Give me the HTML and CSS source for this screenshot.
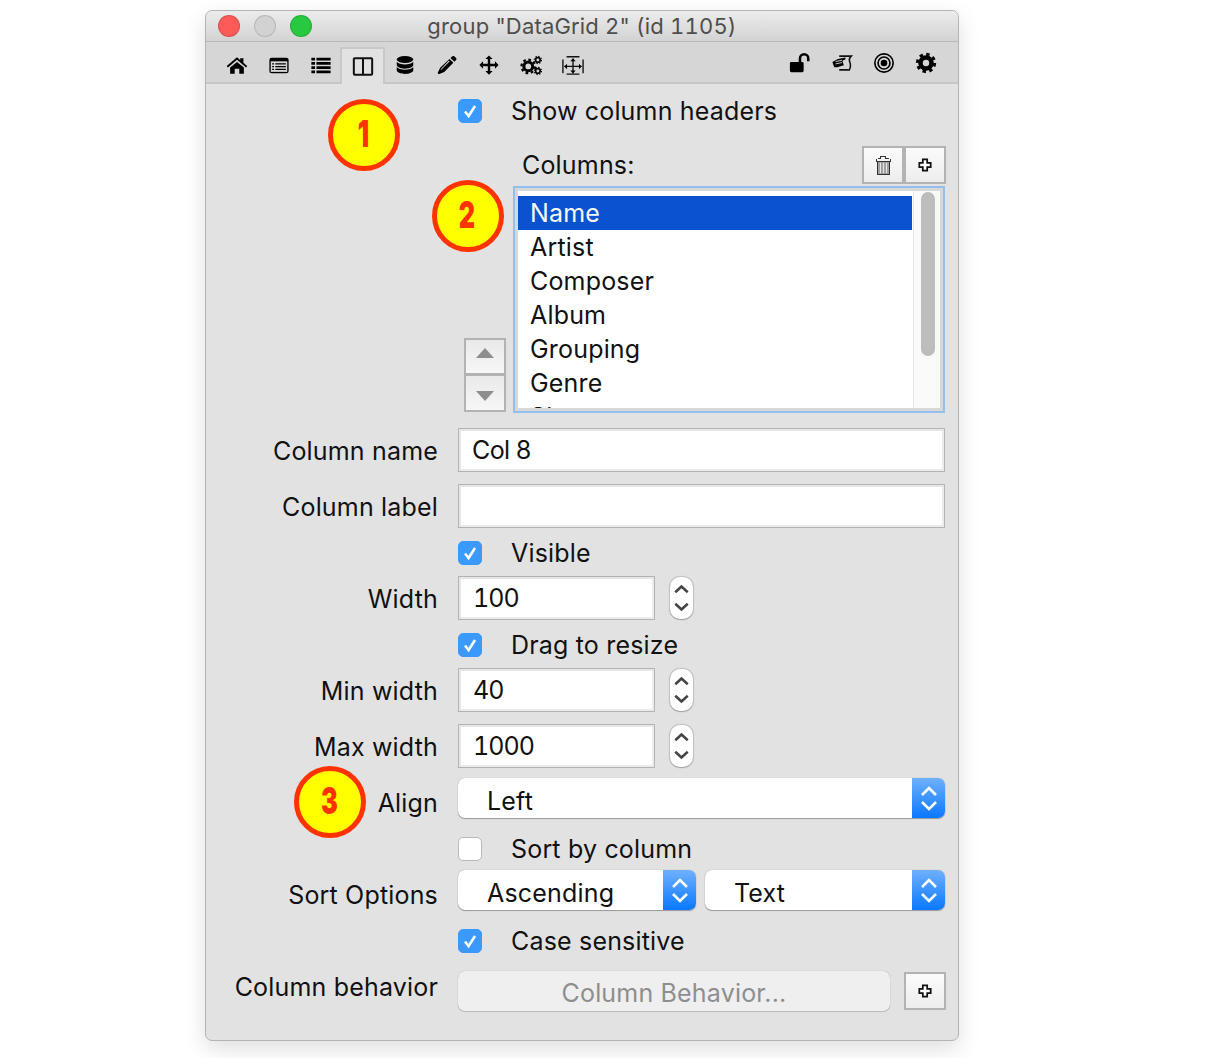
FILE: index.html
```html
<!DOCTYPE html>
<html lang="en">
<head>
<meta charset="utf-8">
<title>group "DataGrid 2"</title>
<link rel="stylesheet" href="styles.css">
</head>
<body>
<svg class="defs" width="0" height="0" aria-hidden="true">
  <defs>
    <symbol id="plus" viewBox="0 0 16 16"><path d="M5.500 1.500h5v4h4v5h-4v4h-5v-4h-4v-5h4z" fill="#fff" stroke="#111" stroke-width="2"/></symbol>
    <symbol id="check" viewBox="0 0 24 24"><path d="M6.500 12.500l4 5 7-11" fill="none" stroke="#fff" stroke-width="2.800"/></symbol>
    <symbol id="updown" viewBox="0 0 24 40"><path d="M5 17l7-7 7 7M5 24l7 7 7-7" fill="none" stroke="#fff" stroke-width="2.600"/></symbol>
    <symbol id="spin" viewBox="0 0 24 42"><path d="M5.500 15l6.500-6 6.500 6M5.500 27l6.500 6 6.500-6" fill="none" stroke="#444" stroke-width="2.600"/></symbol>
  </defs>
</svg>
<main class="window">
  <header class="titlebar">
    <span class="light light-red"></span>
    <span class="light light-gray"></span>
    <span class="light light-green"></span>
    <span class="title">group "DataGrid 2" (id 1105)</span>
  </header>
  <nav class="toolbar">
    <div class="tool"><svg viewBox="0 0 24 24" class="icon"><path d="M12 3.500 .8 13l1.300 1.600L12 6.400l9.900 8.200 1.300-1.600L19 9.500V4.500h-3.500v2z"/><path d="M4.500 14.800 12 8.600l7.500 6.200V21.500H14.500V16h-5v5.500h-5z"/></svg></div>
    <div class="tool"><svg viewBox="0 0 24 24" class="icon"><rect x="1.500" y="4" width="21" height="17" rx="2.500"/><rect x="3" y="8" width="18" height="11.500" fill="#d6d6d6"/><path d="M4.500 10h2v1.500h-2zM4.500 13h2v1.500h-2zM4.500 16h2v1.500h-2zM8 10h11.500v1.500H8zM8 13h11.500v1.500H8zM8 16h11.500v1.500H8z"/></svg></div>
    <div class="tool"><svg viewBox="0 0 24 24" class="icon"><path d="M1.500 4h4v3h-4zM7 4h15.500v3H7zM1.500 8.700h4v3h-4zM7 8.700h15.500v3H7zM1.500 13.400h4v3h-4zM7 13.400h15.500v3H7zM1.500 18h4v3h-4zM7 18h15.500v3H7z"/></svg></div>
    <div class="tool tool-active"><svg viewBox="0 0 24 24" class="icon"><path d="M3 3.500h18a1 1 0 0 1 1 1v16a1 1 0 0 1-1 1H3a1 1 0 0 1-1-1v-16a1 1 0 0 1 1-1zM12 3.500v18" fill="none" stroke="#111" stroke-width="2.200"/></svg></div>
    <div class="tool"><svg viewBox="0 0 24 24" class="icon"><ellipse cx="12" cy="6" rx="9" ry="3.800"/><path d="M3 8.500c1.500 2 5 3 9 3s7.500-1 9-3V12c0 2-4 4-9 4s-9-2-9-4zM3 14.300c1.500 2 5 3 9 3s7.500-1 9-3v3.500c0 2.200-4 4-9 4s-9-1.800-9-4z"/></svg></div>
    <div class="tool"><svg viewBox="0 0 24 24" class="icon"><path d="M18 2.500c.8-.6 1.600-.5 2.200.1l1.700 1.700c.6.600.6 1.500 0 2.200L20 8.500 15.800 4.300zM14.700 5.400l4.200 4.200L9 19.500 3 22 1.800 20.800 4.500 15z"/><path d="M5 17l.5.5 9.500-9.500-1-1z" fill="#d6d6d6"/></svg></div>
    <div class="tool"><svg viewBox="0 0 24 24" class="icon"><path d="M12 1.500l4 4h-2.700V10.700H18.500V8l4 4-4 4v-2.700H13.300V18.500H16l-4 4-4-4h2.700V13.300H5.500V16l-4-4 4-4v2.700h5.200V5.500H8z"/></svg></div>
    <div class="tool"><svg viewBox="0 0 24 24" class="icon"><circle cx="9" cy="13.500" r="4.800" fill="none" stroke="#000" stroke-width="3.400"/><circle cx="9" cy="13.500" r="7.400" fill="none" stroke="#000" stroke-width="2.400" stroke-dasharray="2.900 2.900"/><circle cx="19.500" cy="6.500" r="2.500" fill="none" stroke="#000" stroke-width="1.800"/><circle cx="19.500" cy="6.500" r="3.900" fill="none" stroke="#000" stroke-width="1.300" stroke-dasharray="1.500 1.550"/><circle cx="19.500" cy="18.500" r="2.500" fill="none" stroke="#000" stroke-width="1.800"/><circle cx="19.500" cy="18.500" r="3.900" fill="none" stroke="#000" stroke-width="1.300" stroke-dasharray="1.500 1.550"/></svg></div>
    <div class="tool"><svg viewBox="0 0 24 24" class="icon"><path d="M1 6v15M23 6v15M5 3h14M5 22h14M12 5v16M2.500 13.500h19" fill="none" stroke="#111" stroke-width="1.500"/><path d="M12 5l-3 3h6zM12 21l-3-3h6zM2.500 13.500l3-3v6zM21.500 13.500l-3-3v6z"/></svg></div>
    <div class="tools-right">
      <div class="tool"><svg viewBox="0 0 24 24" class="icon"><rect x="1" y="11" width="15" height="11" rx="1.500"/><path d="M12 12V7a4.500 4.500 0 0 1 9 0v3" fill="none" stroke="#000" stroke-width="2.800"/></svg></div>
      <div class="tool"><svg viewBox="0 0 24 24" class="icon"><path d="M9 4.500h13c-2 2-2.500 4-1.500 6.500s1 5.500-.5 8.500H9" fill="none" stroke="#111" stroke-width="1.700"/><path d="M1.500 11l6-3.500 8-1.500.5 2-3.500 1.500 1.500 5L7 16.500H3.500z"/><path d="M5 10.500l7-1.500M5 13l7-1.500" stroke="#d6d6d6" stroke-width="1"/></svg></div>
      <div class="tool"><svg viewBox="0 0 24 24" class="icon"><circle cx="12" cy="12" r="10" fill="none" stroke="#000" stroke-width="1.800"/><circle cx="12" cy="12" r="6.500" fill="none" stroke="#000" stroke-width="1.800"/><circle cx="12" cy="12" r="3.600"/></svg></div>
      <div class="tool"><svg viewBox="0 0 24 24" class="icon"><circle cx="12" cy="12" r="6" fill="none" stroke="#000" stroke-width="5"/><circle cx="12" cy="12" r="9.300" fill="none" stroke="#000" stroke-width="3.600" stroke-dasharray="3.650 3.650"/></svg></div>
    </div>
  </nav>

  <section class="form">
    <div class="row row-check"><span class="label"></span><span class="box box-on"><svg class="tick"><use href="#check"/></svg></span><span class="check-text">Show column headers</span></div>

    <div class="row row-columns">
      <span class="columns-title">Columns:</span>
      <span class="square-group">
        <button class="square" type="button"><svg viewBox="0 0 20 24" class="trash" shape-rendering="crispEdges"><path d="M7 1h6v2h4v1h2v4h-1v15H3V8H2V4h2V3h3z" fill="#333"/><path d="M8 2h4v2h4v1h2v2H3V5h2V4h3z" fill="#f4f4f4"/><path d="M4 8h13v14H4z" fill="#a0a0a0"/><path d="M6 9h2v12H6zM10 9h1v12h-1zM13 9h2v12h-2z" fill="#e8e8e8"/></svg></button>
        <button class="square" type="button"><svg class="plus"><use href="#plus"/></svg></button>
      </span>
    </div>

    <div class="row row-list">
      <div class="updown">
        <button class="arrow-btn arrow-top" type="button"><span class="tri tri-up"></span></button>
        <button class="arrow-btn arrow-bottom" type="button"><span class="tri tri-down"></span></button>
      </div>
      <div class="listbox">
        <ul class="items">
          <li class="item item-selected">Name</li>
          <li class="item">Artist</li>
          <li class="item">Composer</li>
          <li class="item">Album</li>
          <li class="item">Grouping</li>
          <li class="item">Genre</li>
          <li class="item">Size</li>
        </ul>
        <div class="scrollbar"><div class="thumb"></div></div>
      </div>
    </div>

    <div class="row mt-15"><span class="label">Column name</span><div class="input input-wide">Col 8</div></div>
    <div class="row mt-12"><span class="label">Column label</span><div class="input input-wide"></div></div>
    <div class="row row-check mt-13"><span class="label"></span><span class="box box-on"><svg class="tick"><use href="#check"/></svg></span><span class="check-text">Visible</span></div>
    <div class="row mt-11"><span class="label">Width</span><div class="input input-num">100</div><span class="stepper"><svg class="spin"><use href="#spin"/></svg></span></div>
    <div class="row row-check mt-13"><span class="label"></span><span class="box box-on"><svg class="tick"><use href="#check"/></svg></span><span class="check-text">Drag to resize</span></div>
    <div class="row mt-11"><span class="label">Min width</span><div class="input input-num">40</div><span class="stepper"><svg class="spin"><use href="#spin"/></svg></span></div>
    <div class="row mt-12"><span class="label">Max width</span><div class="input input-num">1000</div><span class="stepper"><svg class="spin"><use href="#spin"/></svg></span></div>
    <div class="row mt-10"><span class="label label-lowered">Align</span><div class="select select-wide"><span class="select-text">Left</span><span class="select-arrows"><svg class="updown-icon"><use href="#updown"/></svg></span></div></div>
    <div class="row row-check mt-19"><span class="label"></span><span class="box"></span><span class="check-text">Sort by column</span></div>
    <div class="row mt-9"><span class="label label-lowered">Sort Options</span>
      <div class="select select-a"><span class="select-text">Ascending</span><span class="select-arrows"><svg class="updown-icon"><use href="#updown"/></svg></span></div>
      <div class="select select-b"><span class="select-text">Text</span><span class="select-arrows"><svg class="updown-icon"><use href="#updown"/></svg></span></div>
    </div>
    <div class="row row-check mt-19"><span class="label"></span><span class="box box-on"><svg class="tick"><use href="#check"/></svg></span><span class="check-text">Case sensitive</span></div>
    <div class="row mt-18"><span class="label label-raised">Column behavior</span>
      <button class="behavior" type="button">Column Behavior...</button>
      <button class="square square-solo" type="button"><svg class="plus"><use href="#plus"/></svg></button>
    </div>
  </section>

  <div class="note note-1"><span class="digit">1</span></div>
  <div class="note note-2"><span class="digit">2</span></div>
  <div class="note note-3"><span class="digit">3</span></div>
</main>
</body>
</html>
```
FILE: styles.css
```css
* { box-sizing: border-box; }
html, body { margin: 0; padding: 0; background: #fff; }
body {
  height: 1058px;
  overflow: hidden;
  font-family: Inter, "Liberation Sans", sans-serif;
  font-size: 25px;
  line-height: 30px;
  letter-spacing: .18px;
  color: #111;
}
.defs { position: absolute; }
button { font: inherit; letter-spacing: inherit; padding: 0; margin: 0; }

.window {
  position: relative;
  width: 754px;
  height: 1031px;
  margin: 10px 0 0 205px;
  background: #e2e2e2;
  border: 1px solid #b4b4b4;
  border-radius: 7px;
  box-shadow: 0 8px 22px rgba(0,0,0,.13);
  overflow: hidden;
}
.titlebar {
  position: relative;
  display: flex;
  align-items: center;
  height: 31px;
  padding-left: 12px;
  gap: 14px;
  background: linear-gradient(#ececec, #d3d3d3);
  border-bottom: 1px solid #b8b8b8;
}
.light { width: 22px; height: 22px; border-radius: 50%; border: 1px solid rgba(0,0,0,.12); }
.light-red { background: #fc5b57; }
.light-gray { background: #d2d2d2; }
.light-green { background: #28c840; }
.title {
  position: absolute;
  left: 0; right: 0;
  top: 0;
  line-height: 31px;
  text-align: center;
  color: #4e4e4e;
  font-size: 22px;
  font-variant-numeric: tabular-nums;
}
.toolbar {
  display: flex;
  height: 42px;
  padding: 0 11px 0 10px;
  background: #d6d6d6;
  border-bottom: 2px solid #c6c6c6;
}
.tool {
  width: 42px;
  height: 40px;
  display: flex;
  align-items: center;
  justify-content: center;
  padding-top: 5px;
}
.tool-active {
  width: 45px;
  height: 37px;
  margin: 5px -1px -2px -2px;
  padding: 0 0 1px;
  background: #e2e2e2;
  border: 2px solid #c8c8c8;
  border-bottom: 0;
}
.tools-right { display: flex; margin-left: auto; }
.tools-right .tool { padding-top: 1px; }
.icon { width: 22px; height: 22px; fill: #000; display: block; }

.form { padding-top: 15px; }
.row { display: flex; align-items: center; margin-right: 12px; }
.label { width: 232px; margin-right: 20px; text-align: right; flex: none; position: relative; top: 1px; }
.label-raised { top: -4px; }
.label-lowered { top: 5px; }
.row-check { height: 24px; }
.check-text { margin-left: 29px; }
.box {
  width: 24px; height: 24px;
  flex: none;
  background: #fff;
  border: 1px solid #b9b9b9;
  border-radius: 5px;
}
.box-on { background: #3b99fc; border-color: #3b99fc; }
.tick { display: block; width: 22px; height: 22px; }

.row-columns { margin-top: 23px; height: 38px; padding-left: 316px; justify-content: space-between; }
.square-group { display: flex; }
.square {
  width: 42px; height: 38px;
  background: linear-gradient(#fbfbfb, #ededed);
  border: 2px solid #b3b3b3;
  display: flex;
  align-items: center;
  justify-content: center;
}
.square-solo { margin-left: 14px; }
.plus { width: 14px; height: 14px; display: block; }
.trash { width: 18px; height: 21px; display: block; }

.row-list { margin-top: 2px; padding-left: 258px; align-items: flex-end; height: 227px; }
.updown { display: flex; flex-direction: column; width: 42px; margin-bottom: 1px; margin-right: 7px; }
.arrow-btn {
  height: 37px;
  border: 2px solid #b3b3b3;
  background: linear-gradient(#e9e9e9, #f7f7f7);
  display: flex;
  justify-content: center;
}
.arrow-top { align-items: flex-start; padding-top: 8px; }
.arrow-bottom { align-items: flex-start; padding-top: 15px; border-top-width: 1px; }
.tri { width: 0; height: 0; border-left: 9px solid transparent; border-right: 9px solid transparent; }
.tri-up { border-bottom: 10px solid #8e8e8e; }
.tri-down { border-top: 10px solid #8e8e8e; }
.listbox {
  width: 432px;
  height: 227px;
  display: flex;
  background: #fff;
  border: 2px solid #93bfec;
  overflow: hidden;
  box-shadow: inset 0 0 0 3px #d8d8d8;
}
.items {
  list-style: none;
  margin: 8px 0 3px 3px;
  padding: 0;
  width: 394px;
  overflow: hidden;
}
.item { height: 34px; line-height: 34px; padding-left: 12px; }
.item-selected { background: #0a52cf; color: #f4f8ff; }
.scrollbar {
  margin: 3px 3px 3px 1px;
  flex: 1;
  border-left: 1px solid #e6e6e6;
  padding: 1px 5px 0 7px;
  background: #fafafa;
}
.thumb { height: 164px; border-radius: 8px; background: #bdbdbd; }

.input {
  height: 44px;
  line-height: 42px;
  background: #fff;
  border: 1px solid #b4b4b4;
  box-shadow: inset 2px 2px 0 #e6e6e6, inset -2px -2px 0 #ececec;
  flex: none;
  font-variant-numeric: tabular-nums;
}
.input-wide { width: 487px; padding-left: 13px; letter-spacing: -.6px; }
.input-num { width: 197px; padding-left: 14px; letter-spacing: -1px; }
.stepper {
  margin-left: 15px;
  width: 23px;
  height: 42px;
  background: #fff;
  border-radius: 10px;
  box-shadow: 0 0 1px 1px rgba(0,0,0,.14), 0 1px 1px rgba(0,0,0,.18);
  display: block;
}
.spin { width: 23px; height: 42px; display: block; }

.select {
  height: 40px;
  display: flex;
  justify-content: space-between;
  background: #fff;
  border-radius: 7px;
  box-shadow: 0 0 1px rgba(0,0,0,.35), 0 1px 1px rgba(0,0,0,.3);
  overflow: hidden;
  flex: none;
}
.select-wide { width: 487px; }
.select-a { width: 238px; margin-right: 9px; }
.select-b { width: 240px; }
.select-text { padding-left: 29px; line-height: 46px; }
.select-arrows {
  width: 33px;
  background: linear-gradient(#6fb0ff, #0a78ff);
  display: flex;
  align-items: center;
  justify-content: center;
}
.updown-icon { width: 24px; height: 40px; display: block; }

.behavior {
  width: 432px;
  height: 40px;
  background: #efefef;
  color: #8e8e8e;
  border: 0;
  border-radius: 7px;
  box-shadow: 0 0 1px rgba(0,0,0,.3), 0 1px 1px rgba(0,0,0,.15);
  padding-top: 4px;
}

.mt-9 { margin-top: 9px; }
.mt-10 { margin-top: 10px; }
.mt-11 { margin-top: 11px; }
.mt-12 { margin-top: 12px; }
.mt-13 { margin-top: 13px; }
.mt-15 { margin-top: 15px; }
.mt-18 { margin-top: 18px; }
.mt-19 { margin-top: 19px; }

.note {
  position: absolute;
  width: 72px;
  height: 72px;
  border-radius: 50%;
  background: #ffff00;
  border: 5px solid #ff3300;
  display: flex;
  align-items: center;
  justify-content: center;
}
.digit {
  color: #ff3300;
  font-family: Inter, "Liberation Sans", sans-serif;
  font-weight: 900;
  font-size: 37px;
  line-height: 37px;
  margin-bottom: 3px;
  transform: scaleX(.68);
}
.note-1 { left: 121.500px; top: 88px; }
.note-2 { left: 225.500px; top: 169px; }
.note-3 { left: 87.500px; top: 755px; }
```
